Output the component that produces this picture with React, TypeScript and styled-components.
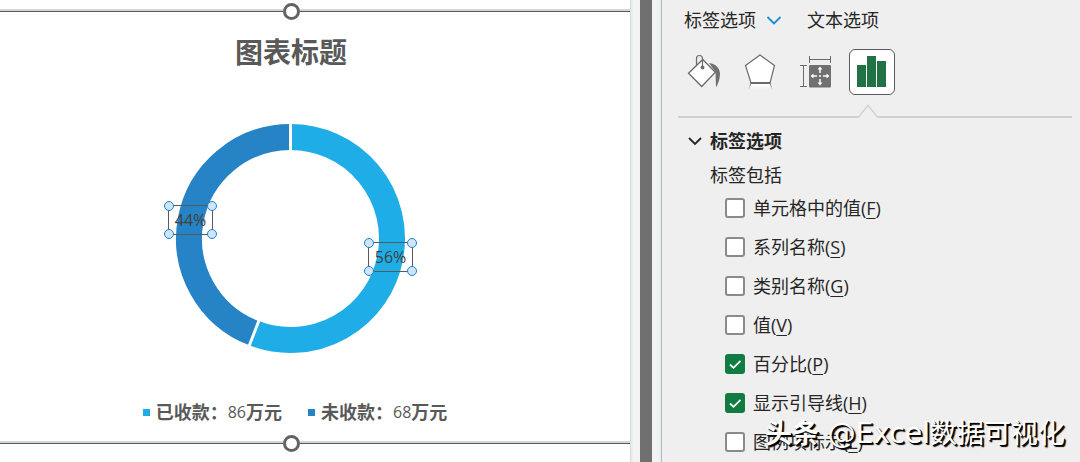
import React from "react";
import styled, { createGlobalStyle } from "styled-components";

const GlobalStyle = createGlobalStyle`
  * { box-sizing: border-box; }
  body {
    margin: 0;
    background: #fff;
    color: #262626;
    font-family: "Open Sans", "Noto Sans CJK SC", sans-serif;
    font-size: 18px;
    line-height: 24px;
  }
  button {
    font: inherit;
    color: inherit;
    background: none;
    border: 0;
    padding: 0;
    cursor: pointer;
  }
  svg { display: block; }
`;

const Page = styled.div`
  position: relative;
  display: flex;
  min-height: 100vh;
  overflow: hidden;
`;

/* ---------- chart ---------- */

const Sheet = styled.main`
  flex: 1;
  min-width: 0;
  padding-top: 9px;
  overflow: hidden;
  background: #fff;
`;

const Chart = styled.section`
  margin-left: -48px;
`;

const FrameEdge = styled.div`
  position: relative;
  height: 3px;
  border-top: 2px solid #d6d6d6;
  background: #595959;
`;

const EdgeKnob = styled.span`
  position: absolute;
  left: 50%;
  top: -8px;
  width: 17px;
  height: 17px;
  margin-left: -8px;
  border: 3px solid #636363;
  border-radius: 50%;
  background: #fff;
`;

const Plot = styled.div`
  display: flex;
  flex-direction: column;
  align-items: center;
  padding: 20px 0 16px;
`;

const Title = styled.h1`
  margin: 0 0 51px;
  font-size: 28px;
  line-height: 40px;
  font-weight: 700;
  color: #595959;
`;

const Ring = styled.div`
  position: relative;
  width: 232px;
  height: 232px;
`;

const DataLabel = styled.div<{ $x: number; $y: number }>`
  position: absolute;
  left: ${(p) => p.$x}px;
  top: ${(p) => p.$y}px;
  display: flex;
  align-items: center;
  justify-content: center;
  width: 45px;
  height: 30px;
  border: 1px solid #595959;
  font-size: 16px;
  color: #404040;
`;

const Handle = styled.i<{ $right?: boolean; $bottom?: boolean }>`
  position: absolute;
  ${(p) => (p.$right ? "right" : "left")}: -5px;
  ${(p) => (p.$bottom ? "bottom" : "top")}: -5px;
  width: 10px;
  height: 10px;
  border: 1px solid #1a7fd4;
  border-radius: 50%;
  background: #cfe5f6;
`;

const Legend = styled.ul`
  display: flex;
  gap: 26px;
  margin: 45px 0 1px;
  padding: 0 0 0 8px;
  list-style: none;
  color: #595959;
  font-weight: 700;
`;

const LegendItem = styled.li`
  display: flex;
  align-items: center;
`;

const Swatch = styled.span<{ $color: string }>`
  width: 7px;
  height: 7px;
  margin-right: 6px;
  background: ${(p) => p.$color};
`;

const Amount = styled.span`
  font-size: 16px;
  font-weight: 400;
`;

/* ---------- divider between sheet and pane ---------- */

const Splitter = styled.div`
  flex: 0 0 32px;
  display: flex;
  justify-content: center;
  border-left: 1px solid #d9d9d9;
  border-right: 1px solid #b5b8ba;
  background: #f3f3f3;
  box-shadow: inset 2px 0 #e6eef0, inset -2px 0 #e6eef0;
`;

const SplitterBar = styled.div`
  width: 12px;
  background: #707070;
`;

/* ---------- format pane ---------- */

const Pane = styled.aside`
  flex: 0 0 418px;
  padding: 8px 8px 0 16px;
  background: #efefef;
`;

const Tabs = styled.nav`
  display: flex;
  gap: 25px;
  padding-left: 6px;
`;

const Tab = styled.button`
  display: flex;
  align-items: center;
  gap: 10px;
`;

const IconBar = styled.div`
  display: flex;
  gap: 10px;
  padding: 17px 0 21px 3px;
`;

const IconButton = styled.button<{ $selected?: boolean }>`
  width: 46px;
  height: 46px;
  border: 1px solid ${(p) => (p.$selected ? "#595959" : "transparent")};
  border-radius: 6px;
  background: ${(p) => (p.$selected ? "#fff" : "transparent")};
`;

const Rule = styled.div`
  position: relative;
  height: 2px;
  background: #d0d0d0;
`;

const Notch = styled.svg`
  position: absolute;
  left: 179px;
  bottom: 0;
`;

const SectionToggle = styled.button`
  display: flex;
  align-items: center;
  gap: 8px;
  margin: 11px 0 0 10px;
  font-weight: 700;
`;

const Options = styled.fieldset`
  margin: 0;
  padding: 0;
  border: 0;
`;

const OptionsCaption = styled.legend`
  padding: 10px 0 1px 32px;
`;

const Option = styled.label`
  display: flex;
  align-items: center;
  gap: 8px;
  height: 39px;
  padding-left: 47px;
`;

const Box = styled.span`
  display: grid;
  width: 20px;
  height: 20px;
  > * { grid-area: 1 / 1; }
  svg { pointer-events: none; }
`;

const Check = styled.input`
  appearance: none;
  width: 20px;
  height: 20px;
  margin: 0;
  border: 2px solid #8a8a8a;
  border-radius: 3px;
  background: #fff;
  &:checked {
    border-color: #107c41;
    background: #107c41;
  }
`;

const Key = styled.u`
  text-decoration-thickness: 1px;
  text-underline-offset: 3px;
`;

const Watermark = styled.div`
  position: absolute;
  right: 15px;
  bottom: 8px;
  font-size: 27px;
  line-height: 40px;
  color: #fff;
  text-shadow: 1px 1px 0 #000, 2px 2px 1px #000;
  white-space: nowrap;
  pointer-events: none;
`;

const Handle_Name = styled.span`
  font-family: "DejaVu Sans", sans-serif;
  font-size: 28px;
`;

const series = [
  { name: "已收款：", value: 86, color: "#1eade6" },
  { name: "未收款：", value: 68, color: "#2683c6" },
];

const options = [
  { text: "单元格中的值", key: "F", on: false },
  { text: "系列名称", key: "S", on: false },
  { text: "类别名称", key: "G", on: false },
  { text: "值", key: "V", on: false },
  { text: "百分比", key: "P", on: true },
  { text: "显示引导线", key: "H", on: true },
  { text: "图例项标示", key: "L", on: false },
];

function Donut() {
  const c = 115.5;
  const outer = 114.5;
  const mid = 101.5;
  const angle = (series[0].value / (series[0].value + series[1].value)) * Math.PI * 2;
  const at = (r: number) => `${c + r * Math.sin(angle)} ${c - r * Math.cos(angle)}`;
  return (
    <svg width="232" height="232" viewBox="0 0 232 232" fill="none">
      <path
        d={`M${c} ${c - mid}A${mid} ${mid} 0 1 1 ${at(mid)}`}
        stroke={series[0].color}
        strokeWidth="26"
      />
      <path
        d={`M${at(mid)}A${mid} ${mid} 0 0 1 ${c} ${c - mid}`}
        stroke={series[1].color}
        strokeWidth="26"
      />
      <path
        d={`M${c} ${c - outer - 1}V28M${at(86)}L${at(outer + 1)}`}
        stroke="#fff"
        strokeWidth="3"
      />
    </svg>
  );
}

function SelectedLabel({ x, y, children }: { x: number; y: number; children: React.ReactNode }) {
  return (
    <DataLabel $x={x} $y={y}>
      {children}
      <Handle />
      <Handle $right />
      <Handle $bottom />
      <Handle $right $bottom />
    </DataLabel>
  );
}

const FillIcon = () => (
  <svg width="44" height="44" viewBox="1 1 44 44" fill="none" stroke="#6b6b6b">
    <path d="M28 14C35 15 39 19 39 25C39 30 37 35 35 38.500L34.500 23Z" fill="#707070" stroke="none" />
    <path d="M7.500 24.200L21.700 10.500L34.300 23.200L20.700 37.500Z" fill="#fff" strokeWidth="1.300" />
    <path d="M15.500 16.500V9.500Q15.500 6.500 18.500 6.500T21.500 10V18" strokeWidth="1.200" />
    <circle cx="21.500" cy="18.500" r="1.900" fill="#6b6b6b" stroke="none" />
  </svg>
);

const EffectsIcon = () => (
  <svg width="44" height="44" viewBox="1 1 44 44" fill="none" stroke="#6b6b6b">
    <defs>
      <linearGradient id="fadeFill" x1="0" y1="0" x2="0" y2="1">
        <stop offset="0" stopColor="#fff" />
        <stop offset="1" stopColor="#efefef" />
      </linearGradient>
      <linearGradient id="fadeLine" gradientUnits="userSpaceOnUse" x1="0" y1="34" x2="0" y2="41">
        <stop offset="0" stopColor="#6b6b6b" />
        <stop offset="1" stopColor="#efefef" />
      </linearGradient>
    </defs>
    <path d="M14 34.500H33L35 41H12Z" fill="url(#fadeFill)" stroke="none" />
    <path d="M13.700 34.500L12 40.500M33.300 34.500L35 40.500" stroke="url(#fadeLine)" />
    <path d="M23 6L37.500 16.500L33 34H14L8.500 16.500Z" fill="#fff" strokeWidth="1.200" />
    <path d="M13.500 34H33.500" strokeWidth="2" />
  </svg>
);

const SizeIcon = () => (
  <svg width="44" height="44" viewBox="1 1 44 44" fill="none" stroke="#6b6b6b">
    <path d="M16.500 7V14M37.500 7V14M16.500 10.500H37.500M7 16.500H14M7 37.500H14M10.500 16.500V37.500" />
    <rect x="16" y="16" width="22" height="22.500" rx="1" fill="#707070" stroke="none" />
    <path d="M27 19V24M27 30V35M19 27H24M30 27H35M26 27H28" stroke="#fff" strokeWidth="1.500" />
    <path
      d="M27 17.500L29.500 20.500H24.500ZM27 36.500L29.500 33.500H24.500ZM17.500 27L20.500 24.500V29.500ZM36.500 27L33.500 24.500V29.500Z"
      fill="#fff"
      stroke="none"
    />
  </svg>
);

const BarsIcon = () => (
  <svg width="44" height="44" viewBox="1 1 44 44" fill="#217346">
    <rect x="8" y="16" width="9" height="22" />
    <rect x="18" y="7" width="9" height="31" />
    <rect x="28" y="12" width="9" height="26" />
  </svg>
);

export default function App() {
  return (
    <>
      <GlobalStyle />
      <Page>
        <Sheet>
          <Chart>
            <FrameEdge><EdgeKnob /></FrameEdge>
            <Plot>
              <Title>图表标题</Title>
              <Ring>
                <Donut />
                <SelectedLabel x={-7} y={82}>44%</SelectedLabel>
                <SelectedLabel x={193} y={119}>56%</SelectedLabel>
              </Ring>
              <Legend>
                {series.map((s) => (
                  <LegendItem key={s.name}>
                    <Swatch $color={s.color} />
                    {s.name}
                    <Amount>{s.value}</Amount>
                    万元
                  </LegendItem>
                ))}
              </Legend>
            </Plot>
            <FrameEdge><EdgeKnob /></FrameEdge>
          </Chart>
        </Sheet>
        <Splitter><SplitterBar /></Splitter>
        <Pane>
          <Tabs>
            <Tab type="button">
              标签选项
              <svg width="16" height="12" viewBox="0 0 16 12" fill="none" stroke="#1e8bd6" strokeWidth="1.800">
                <path d="M1.500 3L8 9.500L14.500 3" />
              </svg>
            </Tab>
            <Tab type="button">文本选项</Tab>
          </Tabs>
          <IconBar>
            <IconButton type="button" aria-label="填充与线条"><FillIcon /></IconButton>
            <IconButton type="button" aria-label="效果"><EffectsIcon /></IconButton>
            <IconButton type="button" aria-label="大小与属性"><SizeIcon /></IconButton>
            <IconButton type="button" aria-label="标签选项" $selected><BarsIcon /></IconButton>
          </IconBar>
          <Rule>
            <Notch width="22" height="14" viewBox="0 0 22 14">
              <path d="M1 14L11 1.500L21 14Z" fill="#efefef" />
              <path d="M1 13.500L11 1.500L21 13.500" fill="none" stroke="#d0d0d0" strokeWidth="1.300" />
            </Notch>
          </Rule>
          <SectionToggle type="button" aria-expanded="true">
            <svg width="14" height="12" viewBox="0 0 14 12" fill="none" stroke="#262626" strokeWidth="1.800">
              <path d="M1 3L7 9L13 3" />
            </svg>
            标签选项
          </SectionToggle>
          <Options>
            <OptionsCaption>标签包括</OptionsCaption>
            {options.map((o) => (
              <Option key={o.key}>
                <Box>
                  <Check type="checkbox" defaultChecked={o.on} />
                  {o.on && (
                    <svg width="20" height="20" viewBox="0 0 20 20" fill="none" stroke="#fff" strokeWidth="1.800">
                      <path d="M5 10.500L8.500 13.800L15.500 6.800" />
                    </svg>
                  )}
                </Box>
                <span>{o.text}(<Key>{o.key}</Key>)</span>
              </Option>
            ))}
          </Options>
        </Pane>
        <Watermark><b>头条</b><Handle_Name> @Excel</Handle_Name>数据可视化</Watermark>
      </Page>
    </>
  );
}
